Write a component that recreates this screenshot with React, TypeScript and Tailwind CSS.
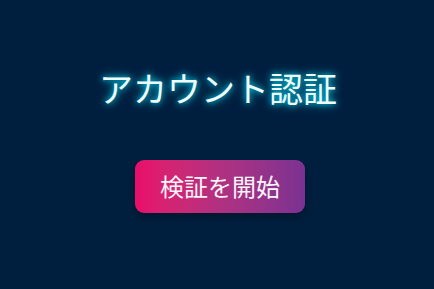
export default function App() {
  return (
    <div className="flex h-screen w-full flex-col items-center justify-center bg-[#001f3f] font-['Noto_Sans_CJK_JP','Noto_Sans',sans-serif]">
      <h1 className="-mt-[6px] ml-[2px] text-[34px] leading-none font-normal text-[#effcff] [text-shadow:0_0_6px_#00e5ff,0_0_12px_rgba(0,229,255,0.5)]">
        アカウント認証
      </h1>
      <button className="mt-[55px] ml-[6px] h-[53px] w-[170px] rounded-[9px] bg-gradient-to-r from-[#ea0b69] to-[#7b3192] text-[24px] leading-none font-normal text-[#fbf4f8] shadow-[0_4px_10px_rgba(0,0,0,0.3)]">
        検証を開始
      </button>
    </div>
  )
}
